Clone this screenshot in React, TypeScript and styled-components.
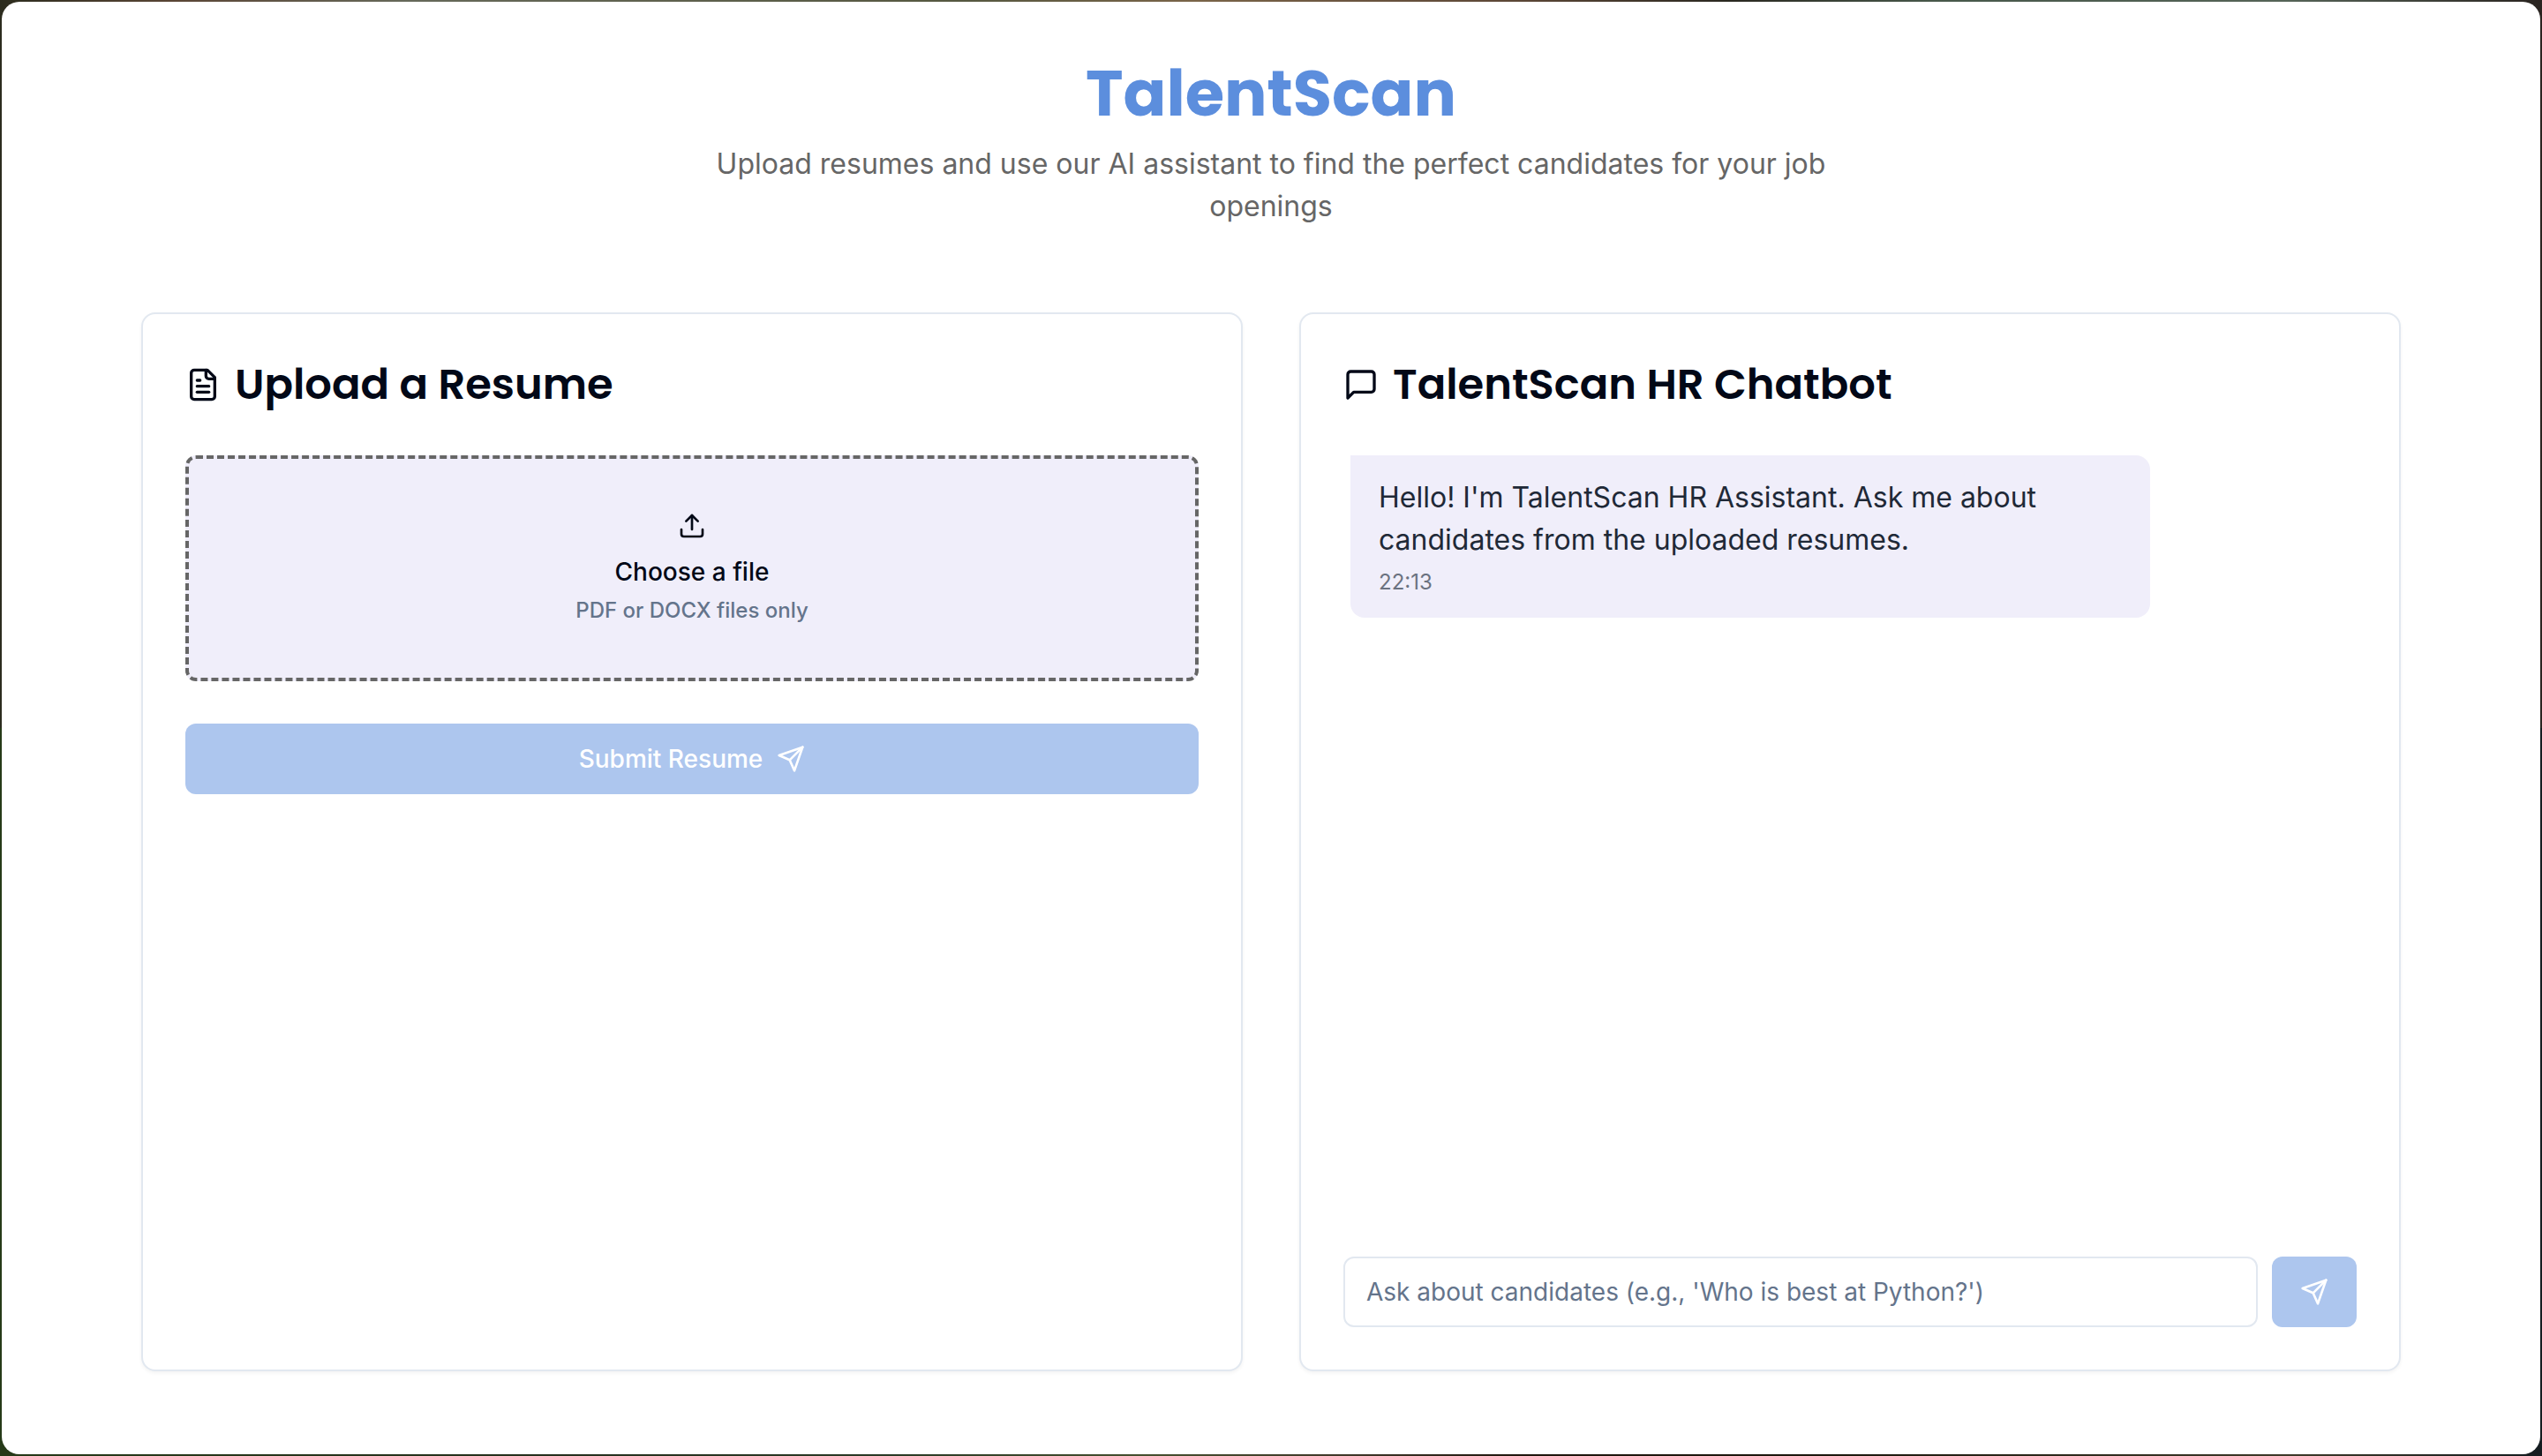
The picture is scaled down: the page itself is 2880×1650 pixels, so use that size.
import React, { useState } from "react";
import styled, { createGlobalStyle } from "styled-components";

const GlobalStyle = createGlobalStyle`
  *, *::before, *::after { box-sizing: border-box; }
  body {
    margin: 0;
    font-family: Inter, "Liberation Sans", sans-serif;
    color: #020817;
    -webkit-font-smoothing: antialiased;
  }
  h1, h2, p { margin: 0; }
`;

const Desktop = styled.div`
  display: flex;
  min-height: 100vh;
  padding: 2px;
  background:
    linear-gradient(to right, #2c2c1e, #5b4636 7%, #66695a 16%, #565840 38%, #7a6448 47%, #5b4636 60%, #2a2820 68%, #47584a 76%, #566458 90%, #2a2420) top / 100% 50% no-repeat,
    linear-gradient(to right, #263a18, #26301e 22%, #2a3a26 35%, #465030 45%, #40382a 53%, #20160e 60%, #1c180e 72%, #3e3a2a 90%, #141c20) bottom / 100% 50% no-repeat;
`;

const Page = styled.main`
  flex: 1;
  display: flex;
  flex-direction: column;
  gap: 96px;
  padding: 64px 64px 94px;
  border-radius: 20px;
  background: #fff;
`;

const Header = styled.header`
  display: flex;
  flex-direction: column;
  align-items: center;
  gap: 16px;
  text-align: center;
`;

const AppTitle = styled.h1`
  font-family: Poppins, Inter, sans-serif;
  font-size: 72px;
  line-height: 80px;
  font-weight: 700;
  color: #5c8edd;
`;

const Tagline = styled.p`
  max-width: 1344px;
  font-size: 32px;
  line-height: 48px;
  color: #666;
`;

const Columns = styled.div`
  flex: 1;
  display: grid;
  grid-template-columns: 1fr 1fr;
  gap: 64px;
  width: 100%;
  max-width: 2560px;
  margin: 0 auto;
`;

const Card = styled.section`
  display: flex;
  flex-direction: column;
  gap: 48px;
  padding: 48px;
  border: 2px solid #e2e8f0;
  border-radius: 16px;
  background: #fff;
  box-shadow: 0 2px 4px rgba(0, 0, 0, 0.05);
`;

const CardTitle = styled.h2`
  display: flex;
  align-items: center;
  gap: 16px;
  font-family: Poppins, Inter, sans-serif;
  font-size: 48px;
  line-height: 64px;
  font-weight: 600;
`;

const Form = styled.form`
  display: flex;
  flex-direction: column;
  gap: 48px;
`;

const DropZone = styled.label`
  display: flex;
  flex-direction: column;
  align-items: center;
  justify-content: center;
  height: 256px;
  border: 4px dashed #666;
  border-radius: 12px;
  background: #f0eefa;
  font-weight: 500;
  cursor: pointer;
`;

const FileInput = styled.input`
  position: absolute;
  width: 1px;
  height: 1px;
  opacity: 0;
`;

const DropLabel = styled.span`
  margin-top: 16px;
  font-size: 28px;
  line-height: 40px;
`;

const DropHint = styled.span`
  margin-top: 8px;
  font-size: 24px;
  line-height: 32px;
  color: #64748b;
`;

const Button = styled.button`
  display: flex;
  align-items: center;
  justify-content: center;
  gap: 16px;
  height: 80px;
  padding: 0 32px;
  border: 0;
  border-radius: 12px;
  background: #adc6ee;
  color: #fff;
  font: 500 28px/40px Inter, sans-serif;
`;

const Messages = styled.div`
  flex: 1;
  padding: 0 8px;
`;

const Bubble = styled.article`
  width: 80%;
  padding: 24px 32px;
  border-radius: 0 16px 16px 16px;
  background: #f0eefa;
  color: #1f2937;
`;

const BubbleText = styled.p`
  font-size: 32px;
  line-height: 48px;
`;

const BubbleTime = styled.time`
  display: block;
  margin-top: 8px;
  font-size: 24px;
  line-height: 32px;
  color: #6b7280;
`;

const AskForm = styled.form`
  display: flex;
  gap: 16px;
`;

const AskInput = styled.input`
  flex: 1;
  min-width: 0;
  height: 80px;
  padding: 0 24px;
  border: 2px solid #e2e8f0;
  border-radius: 12px;
  background: #fff;
  color: #020817;
  font: 400 28px/40px Inter, sans-serif;
  &::placeholder { color: #64748b; opacity: 1; }
`;

const Svg = styled.svg<{ $size: number }>`
  flex: none;
  width: ${(p) => p.$size}px;
  height: ${(p) => p.$size}px;
  fill: none;
  stroke: currentColor;
  stroke-width: 2;
  stroke-linecap: round;
  stroke-linejoin: round;
`;

const icons = {
  file: ["M15 2H6a2 2 0 0 0-2 2v16a2 2 0 0 0 2 2h12a2 2 0 0 0 2-2V7Z", "M14 2v4a2 2 0 0 0 2 2h4", "M10 9H8", "M16 13H8", "M16 17H8"],
  message: ["M21 15a2 2 0 0 1-2 2H7l-4 4V5a2 2 0 0 1 2-2h14a2 2 0 0 1 2 2z"],
  upload: ["M21 15v4a2 2 0 0 1-2 2H5a2 2 0 0 1-2-2v-4", "M17 8l-5-5-5 5", "M12 3v12"],
  send: ["M22 2l-7 20-4-9-9-4Z", "M22 2 11 13"],
};

function Icon({ name, size = 32 }: { name: keyof typeof icons; size?: number }) {
  return (
    <Svg $size={size} viewBox="0 0 24 24" aria-hidden="true">
      {icons[name].map((d) => (
        <path key={d} d={d} />
      ))}
    </Svg>
  );
}

export default function App() {
  const [question, setQuestion] = useState("");
  return (
    <Desktop>
      <GlobalStyle />
      <Page>
        <Header>
          <AppTitle>TalentScan</AppTitle>
          <Tagline>Upload resumes and use our AI assistant to find the perfect candidates for your job openings</Tagline>
        </Header>
        <Columns>
          <Card>
            <CardTitle><Icon name="file" size={40} />Upload a Resume</CardTitle>
            <Form onSubmit={(e) => e.preventDefault()}>
              <DropZone htmlFor="resume">
                <Icon name="upload" />
                <DropLabel>Choose a file</DropLabel>
                <DropHint>PDF or DOCX files only</DropHint>
                <FileInput id="resume" type="file" accept=".pdf,.docx" />
              </DropZone>
              <Button type="submit" disabled>Submit Resume<Icon name="send" /></Button>
            </Form>
          </Card>
          <Card>
            <CardTitle><Icon name="message" size={40} />TalentScan HR Chatbot</CardTitle>
            <Messages>
              <Bubble>
                <BubbleText>Hello! I'm TalentScan HR Assistant. Ask me about candidates from the uploaded resumes.</BubbleText>
                <BubbleTime>22:13</BubbleTime>
              </Bubble>
            </Messages>
            <AskForm onSubmit={(e) => e.preventDefault()}>
              <AskInput
                type="text"
                aria-label="Ask about candidates"
                placeholder="Ask about candidates (e.g., 'Who is best at Python?')"
                value={question}
                onChange={(e) => setQuestion(e.target.value)}
              />
              <Button type="submit" aria-label="Send" disabled><Icon name="send" /></Button>
            </AskForm>
          </Card>
        </Columns>
      </Page>
    </Desktop>
  );
}
